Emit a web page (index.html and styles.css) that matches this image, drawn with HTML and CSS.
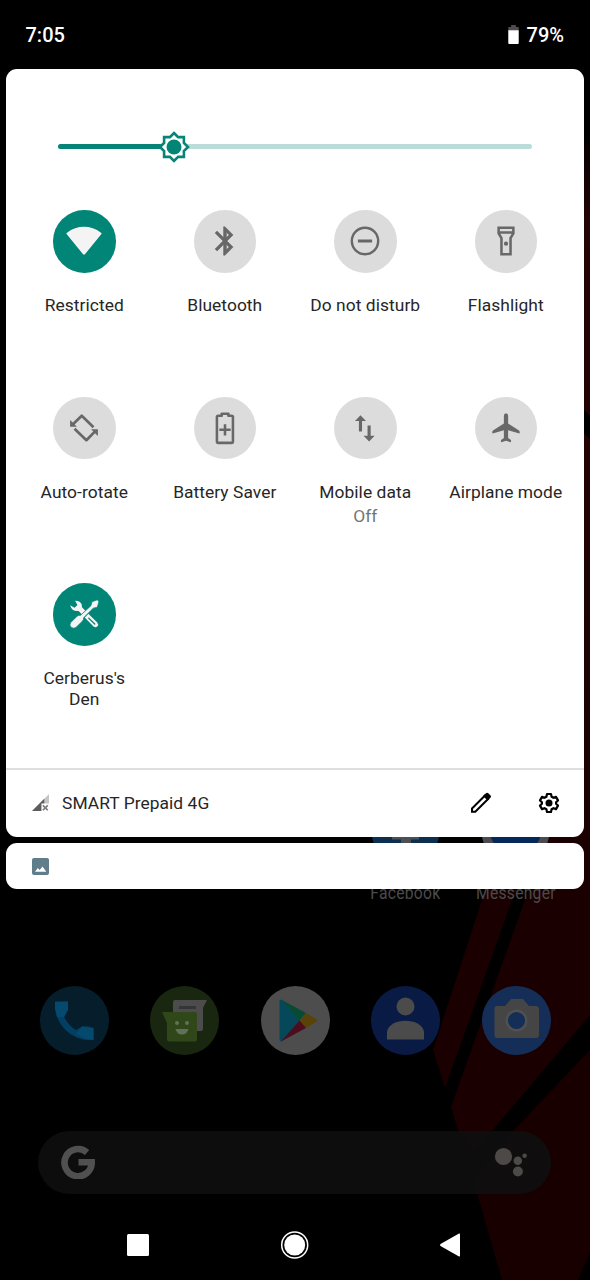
FILE: index.html
```html
<!DOCTYPE html>
<html lang="en">
<head>
<meta charset="utf-8">
<title>Quick settings</title>
<link rel="stylesheet" href="styles.css">
</head>
<body>
<div class="phone">
  <svg class="wallpaper" viewBox="0 0 590 1280">
    <defs>
      <linearGradient id="edge" x1="0" y1="0" x2="0" y2="1">
        <stop offset="0" stop-color="#000"/>
        <stop offset=".12" stop-color="#240406"/>
        <stop offset="1" stop-color="#1c0102"/>
      </linearGradient>
    </defs>
    <rect x="500" y="130" width="90" height="740" fill="url(#edge)"/>
    <path d="M570 396L590 416V439L570 420Z" fill="#000"/>
    <rect x="440" y="837" width="60" height="70" fill="#000"/>
    <path d="M500 837H590V1015L492 1131L474 1152L458 1130L451 1107L525 900L538 870L512 900L445 1088L433 1050L482 900Z" fill="#1b0001"/>
    <path d="M590 1050L513 1131L474 1180L477 1193L502 1280H578L590 1253Z" fill="#180001"/>
  </svg>

  <div class="launcher">
    <div class="row apps">
      <div class="app">
        <svg class="disc" viewBox="0 0 69 69"><circle cx="34.500" cy="34.500" r="34.500" fill="#0c2f50"/><path d="M30 69V44.500H21V34H30V24Q30 13 40 13H47V22H43Q40 22 40 27V34H48V44.500H40V69Z" fill="#4c5054"/></svg>
        <span class="name">Facebook</span>
      </div>
      <div class="app">
        <svg class="disc" viewBox="0 0 69 69"><circle cx="34.500" cy="34.500" r="34.500" fill="#4b4b4f"/><circle cx="34.500" cy="34" r="26" fill="#04285a"/></svg>
        <span class="name">Messenger</span>
      </div>
    </div>
    <div class="row dock">
      <svg class="disc" viewBox="0 0 69 69"><circle cx="34.500" cy="34.500" r="34.500" fill="#061e2b"/><path d="M15 15.500H28V24L24 31Q29 40 36 44L42 40.500H48L53.500 42V54H48C29 53 15 36 15 20Z" fill="#033f62"/><path d="M15 16V22L17 31L24 31L28 24V15.500ZM36 48L46 53L53.500 54V42L42 40.500Z" fill="#05496f"/></svg>
      <svg class="disc" viewBox="0 0 69 69"><circle cx="34.500" cy="34.500" r="34.500" fill="#1a2710"/><path d="M25 14H57L53 22V43Q53 45 51 45H25Q23 45 23 43V16Q23 14 25 14Z" fill="#4b4c4b"/><path d="M29 20H46V23H29Z" fill="#343536"/><path d="M12 26H45Q47 26 47 28V53Q47 55.500 45 55.500H19Q17 55.500 17 53V37Z" fill="#30471a"/><g fill="#60705a"><circle cx="27" cy="37" r="2"/><circle cx="37" cy="37" r="2"/><path d="M25.500 43H38.500Q37 48.500 32 48.500T25.500 43Z"/></g></svg>
      <svg class="disc" viewBox="0 0 69 69"><circle cx="34.500" cy="34.500" r="34.500" fill="#4d4d4d"/><path d="M18.500 15Q18.500 13 21 14L39 34.500L21 55.500Q18.500 56 18.500 53Z" fill="#05485a"/><path d="M20 13.500L45 27L38.500 34.500Z" fill="#074b35"/><path d="M45 27L55 33Q57 34.500 55 36L45 42L38.500 34.500Z" fill="#594308"/><path d="M38.500 34.500L45 42L20 55.500Z" fill="#4e0d1c"/></svg>
      <svg class="disc" viewBox="0 0 69 69"><circle cx="34.500" cy="34.500" r="34.500" fill="#091b45"/><circle cx="34.500" cy="20.500" r="9" fill="#4b4b4b"/><path d="M16 53.500V46C18 31 51 31 53 46V53.500Z" fill="#4b4b4b"/></svg>
      <svg class="disc" viewBox="0 0 69 69"><circle cx="34.500" cy="34.500" r="34.500" fill="#152e57"/><path d="M15 20H23L29 13H41L47 20H54Q57 20 57 23V49Q57 52 54 52H15Q12.500 52 12.500 49V23Q12.500 20 15 20Z" fill="#454545"/><circle cx="34.500" cy="34.500" r="9.800" fill="#152e57" stroke="#505050" stroke-width="2.500"/></svg>
    </div>
    <div class="search">
      <svg class="g" viewBox="0 0 34 34"><path d="M26.100 7.400A13.600 13.600 0 1 0 30.700 17.200H17.500" fill="none" stroke="#505050" stroke-width="6.600"/></svg>
      <svg class="assistant" viewBox="0 0 34 34" fill="#4c4947"><circle cx="9.500" cy="11.500" r="8.600"/><circle cx="23.800" cy="15.700" r="4.300"/><circle cx="23.900" cy="26.500" r="5"/><circle cx="30.600" cy="10.800" r="2.300"/></svg>
    </div>
    <div class="nav">
      <svg viewBox="0 0 30 30"><rect x="4" y="4" width="22" height="22" rx="1.500"/></svg>
      <svg viewBox="0 0 30 30"><circle cx="15.700" cy="15" r="10.500"/><circle cx="15.700" cy="15" r="13" fill="none" stroke="#fff" stroke-width="1.500"/></svg>
      <svg viewBox="0 0 30 30"><path d="M24 3.600Q25 3.200 25 4.400V25.600Q25 26.800 24 26.400L5.500 16Q4.500 15 5.500 14Z"/></svg>
    </div>
  </div>

  <div class="shade">
    <header class="status">
      <span>7:05</span>
      <span class="battery"><svg viewBox="0 0 11 20"><path d="M3 0H8V2H11V6H0V2H3Z" fill="#4d4d4d"/><path d="M0 5.500H11V19Q11 20 10 20H1Q0 20 0 19Z" fill="#fff"/></svg>79%</span>
    </header>

    <main class="panel">
      <div class="brightness">
        <div class="track"><div class="fill"></div></div>
        <svg class="thumb" viewBox="0 0 32 32"><path d="M16 2L20.100 6.100H25.900V11.900L30 16L25.900 20.100V25.900H20.100L16 30L11.900 25.900H6.100V20.100L2 16L6.100 11.900V6.100H11.900Z" fill="#fff" stroke="#078477" stroke-width="2.600"/><circle cx="16" cy="16" r="7.500" fill="#008577"/></svg>
      </div>

      <div class="tiles">
        <div class="tile on"><div class="knob"><svg viewBox="0 0 24 24"><path d="M12 21.700Q11.600 21.700 11.200 21.200L-.3 7Q-.6 6.500 0 6.100Q5.500 2 12 2T24 6.100Q24.600 6.500 24.300 7L12.800 21.200Q12.400 21.700 12 21.700Z"/></svg></div><span>Restricted</span></div>
        <div class="tile"><div class="knob"><svg viewBox="0 0 24 24"><path stroke="#686868" stroke-width=".4" stroke-linejoin="round" d="M17.710 7.710L12 2h-1v7.590L6.410 5 5 6.410 10.590 12 5 17.590 6.410 19 11 14.410V22h1l5.710-5.710-4.300-4.290 4.300-4.290zM13 5.830l1.880 1.880L13 9.590V5.830zm1.880 10.460L13 18.170v-3.760l1.880 1.880z"/></svg></div><span>Bluetooth</span></div>
        <div class="tile"><div class="knob"><svg viewBox="0 0 24 24" class="line"><circle cx="12" cy="12" r="9.300" stroke-width="1.700"/><path d="M7 12H17" stroke-width="2"/></svg></div><span>Do not disturb</span></div>
        <div class="tile"><div class="knob"><svg viewBox="0 0 24 24"><path class="line" stroke-width="1.800" d="M6.800 2.700H17.200V6.700L15.200 9.900V21.400H8.800V9.900L6.800 6.700ZM6.800 6H17.200"/><circle cx="12" cy="13.900" r="1.500"/></svg></div><span>Flashlight</span></div>

        <div class="tile"><div class="knob"><svg viewBox="0 0 24 24"><path class="line" stroke-width="1.900" stroke-linejoin="round" d="M4.200 9.400L10.400 3.300L18.700 11.500M19.800 14.400L13.700 20.600L5.300 12.500"/><path d="M2.200 6.300V11.200H7ZM21.800 17.700V12.900H17Z"/></svg></div><span>Auto-rotate</span></div>
        <div class="tile"><div class="knob"><svg viewBox="0 0 24 24" class="line"><path stroke-width="1.800" stroke-linejoin="round" d="M9.700 3.300V2H14.400V3.300H16.700Q17.600 3.300 17.600 4.200V21.600Q17.600 22.500 16.700 22.500H7.200Q6.300 22.500 6.300 21.600V4.200Q6.300 3.300 7.200 3.300Z"/><path stroke-width="1.800" d="M12 9.300V17.300M8 13.300H16"/></svg></div><span>Battery Saver</span></div>
        <div class="tile"><div class="knob"><svg viewBox="0 0 24 24"><path d="M8.800 3L12.700 7.100H9.900V14.400H7.700V7.100H4.900ZM14.900 21.500L11 17.400H13.800V10.200H16V17.400H18.800Z"/></svg></div><span>Mobile data</span><small>Off</small></div>
        <div class="tile"><div class="knob"><svg viewBox="0 0 24 24"><path d="M12 1.600Q13.500 1.700 13.500 3.300V8.900L21.200 13.800Q22 14.700 21.500 15.800L13.500 13.500V19L15.500 20.500Q15.800 21.500 15.200 22L12 21L8.800 22Q8.200 21.500 8.500 20.500L10.500 19V13.500L2.500 15.800Q2 14.700 2.800 13.800L10.500 8.900V3.300Q10.500 1.700 12 1.600Z"/></svg></div><span>Airplane mode</span></div>

        <div class="tile on"><div class="knob"><svg viewBox="0 0 24 24"><path d="M5.700 2.600Q9.500 2.500 10.400 5.300L10.600 7.300L13 9.700L10.400 12.200L8.200 9.900Q3.500 10.500 2.200 5.800L5.300 7.600L7.400 5.600Z"/><path d="M12.500 14.400L15.100 11.900L21.300 18Q22.600 19.500 21.500 20.700Q20.200 22 18.700 20.800Z"/><path d="M15.300 14.900L19.600 19.100" fill="none" stroke="#008577" stroke-width=".9" stroke-linecap="round"/><path d="M22 2.600L22.500 3.300L21.400 7.200L18.500 7.900L11.700 14.700Q12 16 10.800 17.100L6.300 21.500Q4.800 22.500 3 21.500Q1.300 19.900 2.600 18L7.200 13.500Q8.300 12.700 9.600 12.900L16.900 6.100L17.600 3.400L21.500 2Z" stroke="#008577" stroke-width=".5"/></svg></div><span>Cerberus's<br>Den</span></div>
      </div>

      <footer class="footer">
        <svg class="signal" viewBox="0 0 18 18"><path d="M18 0V18H0Z" fill="#c5c5c5"/><path d="M13 5V18H0Z" fill="#5d5d5d"/><path d="M10 10H18V18H10Z" fill="#fff"/><path d="M11.500 12L16.700 17.200M16.700 12L11.500 17.200" stroke="#777" stroke-width="1.700"/></svg>
        <span class="carrier">SMART Prepaid 4G</span>
        <svg class="edit" viewBox="0 0 22 22"><path d="M2 16.500L14.800 3.700L18.100 7L5.300 19.800H2Z" fill="#fff" stroke="#000" stroke-width="2"/><path d="M13 4L16.300 1Q17.300 .4 18.300 1.200L20.600 3.500Q21.400 4.500 20.600 5.500L17.600 8.600Z"/></svg>
        <svg class="gear" viewBox="0 0 22 22"><path d="M9 2H13L13.600 4.700L15.500 5.800L18 4.900L20 8.400L18.100 10.200V11.800L20 13.600L18 17.100L15.500 16.200L13.600 17.300L13 20H9L8.400 17.300L6.500 16.200L4 17.100L2 13.600L3.900 11.800V10.200L2 8.400L4 4.900L6.500 5.800L8.400 4.700Z" fill="none" stroke="#000" stroke-width="2.200" stroke-linejoin="round"/><circle cx="11" cy="11" r="3.500"/></svg>
      </footer>
    </main>

    <div class="shelf"><svg viewBox="0 0 17 17"><rect width="17" height="17" rx="2" fill="#607d8b"/><path d="M3 13.800L5.800 10L7.700 12L10.500 8.500L14.300 13.800Z" fill="#fff"/></svg></div>
  </div>
</div>
</body>
</html>
```
FILE: styles.css
```css
* { box-sizing: border-box; }
body { margin: 0; background: #000; font-family: Roboto, "Liberation Sans", sans-serif; }
svg { display: block; flex: none; }

.phone { position: relative; width: 590px; height: 1280px; overflow: hidden; background: #000; }
.wallpaper { position: absolute; inset: 0; width: 590px; height: 1280px; }
.launcher { position: absolute; inset: 0; padding-top: 795px; }

.row { display: flex; padding: 0 19px 0 18.7px; }
.apps { justify-content: flex-end; height: 191px; }
.app { width: 110.4px; display: flex; flex-direction: column; align-items: center; }
.disc { width: 69px; height: 69px; }
.name { margin-top: 18px; color: #4b4b4b; font-size: 18px; line-height: 21px; letter-spacing: .3px; transform: scaleX(.87); }
.dock { justify-content: space-between; height: 145px; padding: 0 39.5px; }
.search { display: flex; justify-content: space-between; align-items: center; width: 513px; height: 63px; margin-left: 38px; padding: 0 23px 1px; border-radius: 32px; background: rgba(14, 14, 14, .9); }
.search svg { width: 34px; height: 34px; }
.nav { display: flex; justify-content: space-between; margin-top: 36px; padding: 0 125px 0 123px; fill: #fff; }
.nav svg { width: 30px; height: 30px; }

.shade { position: relative; padding: 0 6px; }
.status { display: flex; justify-content: space-between; align-items: center; height: 69px; padding: 1px 20px 0 19.5px; color: #fff; font-size: 20px; font-weight: 500; }
.battery { display: flex; align-items: center; gap: 8px; }
.battery svg { width: 11px; height: 19px; margin-top: -1px; }

.panel { height: 768px; border-radius: 11px; background: #fff; overflow: hidden; }
.brightness { display: flex; align-items: center; position: relative; height: 141px; padding: 14px 52px 0; }
.track { width: 100%; height: 4.5px; border-radius: 3px; background: #bbddd9; overflow: hidden; }
.fill { width: 24.4%; height: 100%; background: #078477; }
.thumb { position: absolute; left: 151.5px; top: 61.7px; width: 32px; height: 32px; }

.tiles { display: grid; grid-template-columns: repeat(4, 140.5px); grid-auto-rows: 186.5px; height: 558px; padding-left: 8px; color: #262626; font-size: 17.4px; }
.tile { display: flex; flex-direction: column; align-items: center; text-align: center; line-height: 21px; letter-spacing: .05px; }
.knob { display: grid; place-items: center; width: 62.5px; height: 62.5px; margin-bottom: 22.9px; border-radius: 50%; background: #dcdcdc; }
.knob svg { width: 34px; height: 34px; fill: #686868; overflow: visible; }
.on .knob { background: #008577; }
.on .knob svg { fill: #f4f4f4; }
.knob .line { fill: none; stroke: #686868; }
.tile small { margin-top: 3px; color: #757575; font-size: 17.4px; }

.footer { display: flex; align-items: center; height: 69px; padding: 0 24px 2px 26px; border-top: 2px solid #dedede; }
.signal { width: 17px; height: 17px; }
.carrier { margin-left: 13px; color: #262626; font-size: 17.4px; letter-spacing: .05px; }
.edit { width: 22px; height: 22px; margin-left: auto; }
.gear { width: 22px; height: 22px; margin-left: 46px; }
.shelf { display: flex; align-items: center; height: 46px; margin-top: 6px; padding-left: 26px; border-radius: 11px; background: #fff; }
.shelf svg { width: 17px; height: 17px; }
```
